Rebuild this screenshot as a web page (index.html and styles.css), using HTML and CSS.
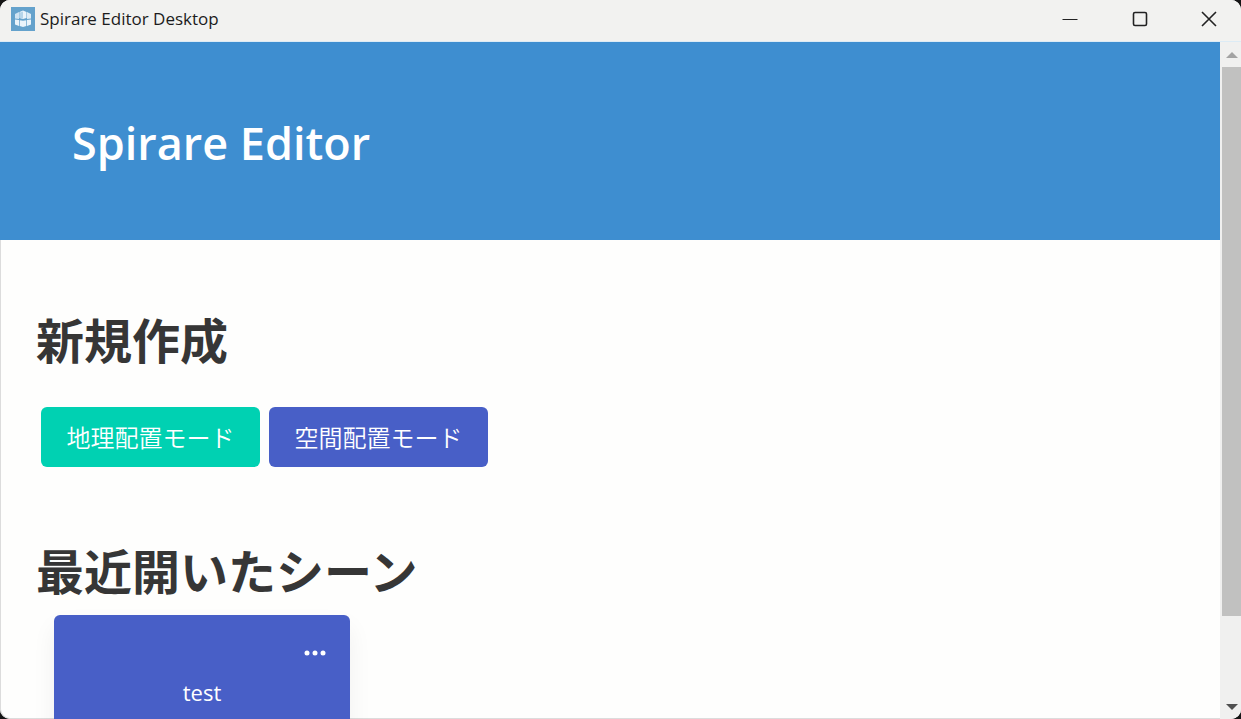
FILE: index.html
```html
<!DOCTYPE html>
<html lang="ja">
<head>
<meta charset="utf-8">
<title>Spirare Editor Desktop</title>
<link rel="stylesheet" href="styles.css">
</head>
<body>
<div class="window">
  <header class="titlebar">
    <svg class="app-icon" viewBox="0 0 24 24" aria-hidden="true">
      <rect width="24" height="24" fill="#64a2cc"/>
      <g fill="#eaf4fb">
        <path d="M8.500 5 12 3.500 15.500 5V11L12 12 8.500 11z"/>
        <path d="M4 7 8 5V12L4 11.500z" opacity=".8"/>
        <path d="M16 5 20 7V11.500L16 12z" opacity=".9"/>
        <path d="M4 12.500 8 13V19L4 17.500z"/>
        <path d="M8.700 13.200 12 13.700 15.300 13.200V19L12 20 8.700 19z"/>
        <path d="M16 13 20 12.500V17.500L16 19z"/>
      </g>
      <path d="M9 5.500 12 4.500V11.500L9 11z" fill="#b5d5ea"/>
    </svg>
    <span class="app-name">Spirare Editor Desktop</span>
    <div class="controls">
      <button class="control" type="button" aria-label="最小化"><svg viewBox="0 0 16 16"><path d="M0.500 8.500H15.500"/></svg></button>
      <button class="control" type="button" aria-label="最大化"><svg class="bold" viewBox="0 0 16 16"><rect x="1.500" y="1.500" width="13" height="13" rx="1.500"/></svg></button>
      <button class="control" type="button" aria-label="閉じる"><svg class="bold" viewBox="0 0 16 16"><path d="M1 1 15 15M15 1 1 15"/></svg></button>
    </div>
  </header>
  <div class="viewport">
    <main class="page">
      <section class="hero"><h1 class="hero-title">Spirare Editor</h1></section>
      <section class="create">
        <h2 class="heading">新規作成</h2>
        <div class="buttons">
          <button class="button geo" type="button">地理配置モード</button>
          <button class="button space" type="button">空間配置モード</button>
        </div>
      </section>
      <section class="recent">
        <h2 class="heading">最近開いたシーン</h2>
        <article class="card">
          <button class="menu" type="button" aria-label="メニュー"><svg viewBox="0 0 22 6"><circle cx="3" cy="3" r="2.500"/><circle cx="11" cy="3" r="2.500"/><circle cx="19" cy="3" r="2.500"/></svg></button>
          <p class="scene">test</p>
        </article>
      </section>
    </main>
    <div class="scrollbar" aria-hidden="true">
      <svg class="arrow up" viewBox="0 0 12 6"><path d="M0 6 6 0 12 6z"/></svg>
      <div class="track"><div class="thumb"></div></div>
      <svg class="arrow down" viewBox="0 0 12 6"><path d="M0 0H12L6 6z"/></svg>
    </div>
  </div>
</div>
</body>
</html>
```
FILE: styles.css
```css
* { box-sizing: border-box; }
body {
  margin: 0;
  background: #151515;
  color: #363636;
  font-family: "Open Sans", "Noto Sans CJK JP", sans-serif;
}
button { border: 0; font: inherit; cursor: pointer; }
h1, h2, p { margin: 0; }
.window {
  display: flex;
  flex-direction: column;
  height: 100vh;
  overflow: hidden;
  border-radius: 10px;
  background: #fefefd;
  box-shadow: inset 0 0 0 1px #dcdcdc;
}
.titlebar {
  display: flex;
  align-items: center;
  flex: none;
  height: 42px;
  padding: 0 0 3px 11px;
  background: #f2f2f0;
  border-bottom: 1px solid #dcebf5;
}
.app-icon { width: 24px; height: 24px; }
.app-name {
  margin-left: 5px;
  color: #1c1c1c;
  font-size: 17px;
  line-height: 24px;
}
.controls { display: flex; margin-left: auto; }
.control {
  display: grid;
  place-items: center;
  width: 70px;
  height: 38px;
  padding: 0;
  background: none;
}
.control:last-child { width: 68px; }
.control svg {
  width: 16px;
  height: 16px;
  fill: none;
  stroke: #222;
  stroke-width: 1;
}
.control .bold { stroke-width: 1.6; }
.controls { margin-right: -2px; }
.viewport { display: flex; flex: 1; min-height: 0; }
.page { flex: 1; overflow: hidden; }
.hero { padding: 68px 72px 64px; background: #3e8ed0; }
.hero-title {
  color: #fff;
  font-size: 45px;
  font-weight: 600;
  line-height: 66px;
}
.heading {
  font-family: "Noto Sans CJK JP", sans-serif;
  font-size: 48px;
  font-weight: 700;
  line-height: 54px;
}
.create { padding: 71px 36px 0; }
.buttons { display: flex; gap: 9px; padding: 42px 5px 0; }
.button {
  min-width: 219px;
  height: 60px;
  padding: 0 24px 2px;
  border-radius: 6px;
  color: #fff;
  font-family: "Noto Sans CJK JP", sans-serif;
  font-size: 24px;
  font-weight: 350;
}
.geo { background: #00d1b2; }
.space { background: #485fc7; }
.recent { padding: 75px 36px 0; }
.card {
  display: flex;
  flex-direction: column;
  width: 296px;
  height: 200px;
  margin: 19px 18px;
  padding: 24px;
  border-radius: 6px;
  background: #485fc7;
  color: #fff;
  box-shadow: 0 12px 24px rgba(10, 10, 10, .06);
}
.menu {
  align-self: flex-end;
  display: grid;
  place-items: center;
  height: 28px;
  padding: 0;
  background: none;
}
.menu svg { width: 22px; height: 6px; fill: #fff; }
.scene { padding-top: 7px; font-size: 22px; line-height: 36px; text-align: center; }
.scrollbar {
  display: flex;
  flex-direction: column;
  align-items: center;
  flex: none;
  width: 21px;
  padding: 10px 0 9px 2px;
  background: #f0f0ef;
}
.arrow { flex: none; width: 12px; height: 6px; }
.up { margin: 0 0 9px 1px; fill: #a3a3a3; }
.down { margin: 10px 0 0 1px; fill: #505050; }
.track { flex: 1; width: 100%; }
.thumb { height: 87.5%; background: #c1c1c0; }
```
